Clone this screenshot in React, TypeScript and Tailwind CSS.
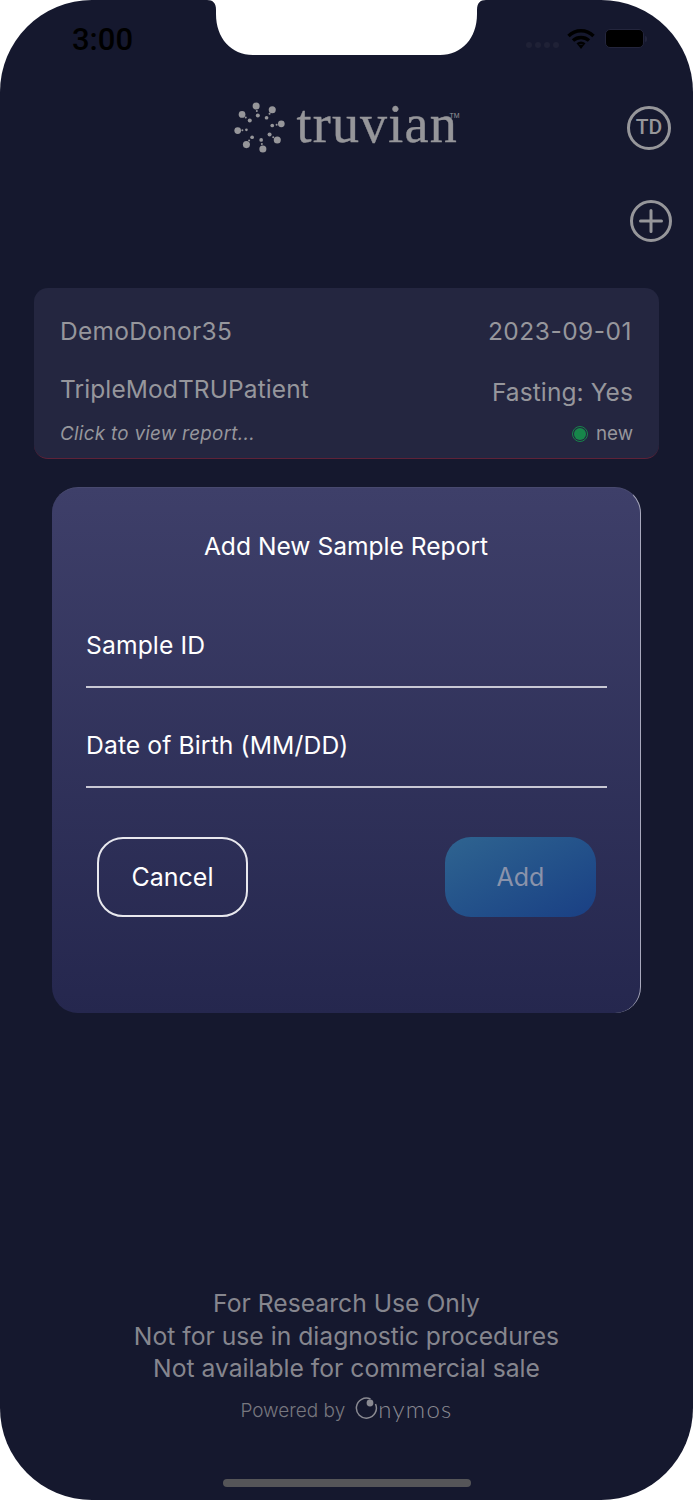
import React from "react";

const logoDots: [number, number, number][] = [
  // big outer dots
  [107, 47, 10.5], [155, 58, 10.5], [182, 100, 10], [170, 148, 10.5], [127, 175, 10.5], [78, 162, 10.5], [52, 120, 10], [65, 72, 10],
  // inner dots
  [112, 75, 6], [138, 82, 5.5], [155, 105, 5.5], [147, 132, 6], [122, 148, 5.5], [95, 140, 5.5], [78, 118, 4], [88, 90, 6],
  // connecting specks
  [109, 62, 3], [147, 70, 3], [168, 103, 3], [158, 140, 3], [124, 160, 3], [86, 150, 3], [66, 119, 3], [76, 81, 3],
];

function TruvianMark() {
  return (
    <svg width="52" height="52" viewBox="38 32 155 155" fill="#96969a">
      {logoDots.map(([cx, cy, r], i) => (
        <circle key={i} cx={cx} cy={cy} r={r} />
      ))}
    </svg>
  );
}

function Notch() {
  return (
    <svg className="absolute left-[207px] top-0" width="279" height="55" viewBox="0 0 279 55" fill="#ffffff">
      <path d="M0 0 C6 0 9 3 9 10 V14 C9 38 24 55 46 55 H233 C255 55 270 38 270 14 V10 C270 3 273 0 279 0 Z" />
    </svg>
  );
}

function StatusBar() {
  return (
    <div className="flex h-[80px] items-start justify-between pl-[72px] pr-[46px] pt-[21px]">
      <span className="font-['Roboto',sans-serif] text-[31px] leading-[38px] font-medium text-black">3:00</span>
      <div className="flex items-center pt-[7px]">
        <div className="mr-[8px] mt-[12px] flex gap-[3px]">
          <span className="h-[6px] w-[6px] rounded-full bg-[#1f2136]" />
          <span className="h-[6px] w-[6px] rounded-full bg-[#1f2136]" />
          <span className="h-[6px] w-[6px] rounded-full bg-[#1f2136]" />
          <span className="h-[6px] w-[6px] rounded-full bg-[#1f2136]" />
        </div>
        <svg width="28" height="21" viewBox="0 0 28 21" fill="none" stroke="#000000" strokeWidth="3.4">
          <path d="M1.5 8 C8.5 1 19.5 1 26.5 8" />
          <path d="M6 12.5 C10.5 8.5 17.5 8.5 22 12.5" />
          <path d="M10.3 16.3 C12.5 14.6 15.5 14.6 17.7 16.3" strokeWidth="2.6" />
          <path d="M11 17 L14 21 L17 17 Z" fill="#000000" stroke="none" />
        </svg>
        <div className="ml-[10px] h-[19px] w-[39px] rounded-[5px] border border-[#23253c] bg-black" />
        <span className="ml-[1px] h-[6px] w-[2px] rounded-r-sm bg-[#23253c]" />
      </div>
    </div>
  );
}

function Header() {
  return (
    <div className="relative flex h-[120px] items-start justify-center pt-[21px]">
      <div className="flex items-center gap-[12px] pr-[2px]">
        <TruvianMark />
        <div className="relative h-[50px] w-[162px]">
          <span className="absolute left-0 top-[-7px] font-['Liberation_Serif',serif] text-[54px] leading-[58px] tracking-[1.2px] text-[#96969a] [-webkit-text-stroke:0.4px_#96969a]">
            truvian
          </span>
          <span className="absolute right-[-1px] top-[9px] font-['Liberation_Sans',sans-serif] text-[7px] text-[#96969a]">
            TM
          </span>
        </div>
      </div>
      <div className="absolute right-[22px] top-[26px] flex h-[44px] w-[44px] items-center justify-center rounded-full border-[3px] border-[#96969a] font-['Roboto',sans-serif] text-[21px] font-medium text-[#96969a]">
        TD
      </div>
    </div>
  );
}

function ReportCard() {
  return (
    <div className="mx-[34px] h-[171px] rounded-[14px] border-b border-[#5e2238] bg-[#242640] px-[26px] text-[#96969c]">
      <div className="flex items-center justify-between pt-[28px] text-[24.5px] leading-[30px]">
        <span className="tracking-[0.3px]">DemoDonor35</span>
        <span className="mr-[1px] tracking-[0.5px]">2023-09-01</span>
      </div>
      <div className="flex items-start justify-between pt-[28px] text-[24.5px] leading-[30px]">
        <span className="tracking-[0.1px]">TripleModTRUPatient</span>
        <span className="pt-[3px] tracking-[0.1px]">Fasting: Yes</span>
      </div>
      <div className="flex items-center justify-between pt-[14px] text-[18.8px] leading-[26px]">
        <span className="italic tracking-[0.3px]">Click to view report...</span>
        <span className="flex items-center gap-[8px]">
          <span className="flex h-[16px] w-[16px] items-center justify-center rounded-full border border-[#17834a]">
            <span className="h-[12px] w-[12px] rounded-full bg-[#17864a]" />
          </span>
          new
        </span>
      </div>
    </div>
  );
}

function Field({ label }: { label: string }) {
  return (
    <div className="h-[100px] border-b-2 border-[#c8c8d4]">
      <div className="pt-[41px] text-[24.7px] leading-[32px] tracking-[0.1px] text-white">{label}</div>
    </div>
  );
}

function AddDialog() {
  return (
    <div className="mx-[52px] mt-[28px] h-[526px] rounded-[26px] border-r border-t border-r-[#a9a9bd] border-t-[#48496f] bg-gradient-to-b from-[#3e3f69] to-[#25274e]">
      <div className="pt-[42px] text-center text-[24.6px] leading-[32px] text-white">Add New Sample Report</div>
      <div className="ml-[34px] mr-[33px] mt-[26px]">
        <Field label="Sample ID" />
        <Field label="Date of Birth (MM/DD)" />
      </div>
      <div className="mt-[49px] flex justify-between pl-[45px] pr-[44px]">
        <button className="flex h-[80px] w-[151px] items-center justify-center rounded-[26px] border-2 border-[#e8e8ee] pt-[2px] text-[25px] text-white">
          Cancel
        </button>
        <button className="flex h-[80px] w-[151px] items-center justify-center rounded-[26px] bg-gradient-to-br from-[#2f6490] to-[#1a3f84] pt-[2px] text-[25px] text-[#8a93ab]">
          Add
        </button>
      </div>
    </div>
  );
}

function Footer() {
  return (
    <div className="mt-[274px] text-center text-[#86868e]">
      <div className="text-[24.7px] leading-[32.5px]">
        <div>For Research Use Only</div>
        <div>Not for use in diagnostic procedures</div>
        <div>Not available for commercial sale</div>
      </div>
      <div className="mt-[11px] flex h-[32px] items-center justify-center gap-[9px] font-light text-[#77777f]">
        <span className="text-[19px]">Powered by</span>
        <div className="mb-[8px] flex items-end">
          <svg width="24" height="26" viewBox="0 0 24 26" fill="none" className="mb-[1px]">
            <path d="M16.5 5 A10 10 0 1 0 21.5 10" stroke="#8a8a92" strokeWidth="1.5" />
            <circle cx="16" cy="9" r="3.4" fill="#8a8a92" />
          </svg>
          <span className="font-['Lato',sans-serif] text-[24px] leading-[24px] font-light tracking-[1.3px] text-[#8a8a92]">
            nymos
          </span>
        </div>
      </div>
    </div>
  );
}

export default function App() {
  return (
    <div className="h-[1500px] w-[693px] overflow-hidden bg-white font-['Inter',sans-serif]">
      <div className="relative h-[1500px] rounded-[92px] bg-[#15182e]">
        <Notch />
        <StatusBar />
        <Header />
        <div className="flex justify-end pr-[20px]">
          <svg width="44" height="44" viewBox="0 0 44 44" fill="none" stroke="#96969a" strokeWidth="3" className="mt-[-1px]">
            <circle cx="22" cy="22" r="19.5" />
            <path d="M22 11.5 V32.5 M11.5 22 H32.5" strokeLinecap="round" />
          </svg>
        </div>
        <div className="h-[45px]" />
        <ReportCard />
        <AddDialog />
        <Footer />
        <div className="absolute bottom-[13px] left-[223px] h-[8px] w-[248px] rounded-full bg-[#555558]" />
      </div>
    </div>
  );
}
